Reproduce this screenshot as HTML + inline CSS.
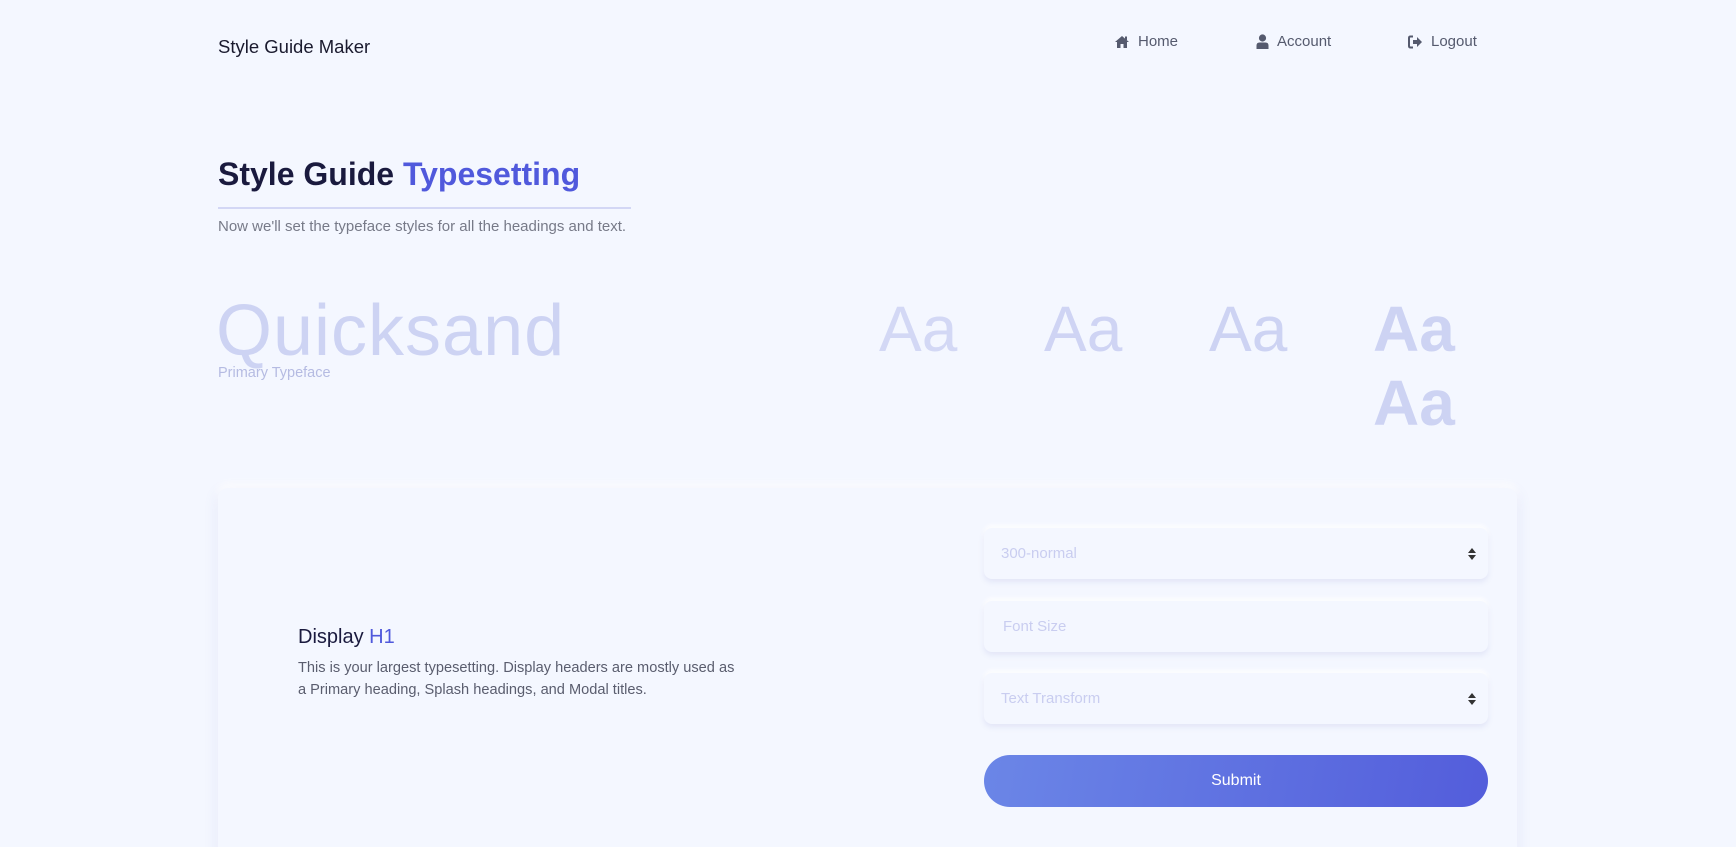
<!DOCTYPE html>
<html><head><meta charset="utf-8"><style>
*{margin:0;padding:0;box-sizing:border-box}
html,body{width:1736px;height:847px;overflow:hidden}
body{background:#f4f7ff;font-family:"Liberation Sans",sans-serif;position:relative}
.a{position:absolute;white-space:nowrap}
.nav{font-size:15px;color:#555a6e;display:flex;align-items:center;gap:8px}
.field{position:absolute;left:984px;width:504px;height:51px;background:#f4f7ff;border-radius:8px;box-shadow:0 3px 6px rgba(120,130,200,.14),0 -3px 5px rgba(255,255,255,.9);font-size:15px;color:#c9cdf0;padding-left:17px;line-height:51px}
.arr{position:absolute;right:12px;top:20px;width:8px;height:12px}
.aa{font-size:64px;color:#cdd3f3;top:292px}
</style></head><body>
<div class="a" style="left:218px;top:36px;font-size:18.5px;color:#1a1a2e">Style Guide Maker</div>
<div class="a nav" style="left:1114px;top:33px"><svg width="16" height="14" viewBox="0 0 16 14"><path d="M8 1 L1 7 L2.5 7 L3 7 L3 13 L6.5 13 L6.5 9 L9.5 9 L9.5 13 L13 13 L13 7 L15 7 Z" fill="#555a6e"/><rect x="11" y="1.5" width="2" height="3.5" fill="#555a6e"/></svg>Home</div>
<div class="a nav" style="left:1256px;top:33px"><svg width="13" height="15" viewBox="0 0 13 15"><circle cx="6.5" cy="4" r="3.6" fill="#555a6e"/><path d="M0.5 15 L0.5 11.5 Q0.5 8.5 3.5 8.5 L9.5 8.5 Q12.5 8.5 12.5 11.5 L12.5 15 Z" fill="#555a6e"/></svg>Account</div>
<div class="a nav" style="left:1408px;top:33px"><svg width="15" height="14" viewBox="0 0 15 14"><path d="M5 1.5 L2.5 1.5 Q1 1.5 1 3 L1 11 Q1 12.5 2.5 12.5 L5 12.5" stroke="#555a6e" stroke-width="2" fill="none"/><path d="M5 5 L9 5 L9 2 L14 7 L9 12 L9 9 L5 9 Z" fill="#555a6e"/></svg>Logout</div>

<div class="a" style="left:218px;top:156px;font-size:32px;font-weight:bold;color:#1a1a3e">Style Guide <span style="color:#5059dc">Typesetting</span></div>
<div class="a" style="left:218px;top:207px;width:413px;height:2px;background:#d3d7f5"></div>
<div class="a" style="left:218px;top:218px;font-size:15px;color:#777a88">Now we'll set the typeface styles for all the headings and text.</div>

<div class="a" style="left:216px;top:290px;font-size:72px;color:#cdd3f3;letter-spacing:1px">Quicksand</div>
<div class="a" style="left:218px;top:365px;font-size:14.5px;color:#b5bbe2">Primary Typeface</div>
<div class="a aa" style="left:879px;font-weight:300;color:#d3d8f5">Aa</div>
<div class="a aa" style="left:1044px;color:#cfd4f4">Aa</div>
<div class="a aa" style="left:1209px">Aa</div>
<div class="a aa" style="left:1373px;font-weight:bold">Aa</div>
<div class="a aa" style="left:1373px;top:366px;font-weight:bold">Aa</div>

<div class="a" style="left:218px;top:488px;width:1299px;height:372px;background:#f4f7ff;border-radius:10px;box-shadow:0 4px 14px rgba(120,130,210,.16),0 -5px 8px rgba(255,255,255,.9)"></div>
<div class="a" style="left:298px;top:626px;font-size:20px;color:#1a1a3e">Display <span style="color:#5059dc">H1</span></div>
<div class="a" style="left:298px;top:657px;font-size:14.6px;line-height:22px;color:#5a5d6e;white-space:normal;width:446px">This is your largest typesetting. Display headers are mostly used as a Primary heading, Splash headings, and Modal titles.</div>

<div class="field" style="top:528px">300-normal<svg class="arr" viewBox="0 0 8 12"><path d="M4 0 L8 5 L0 5 Z M0 7 L8 7 L4 12 Z" fill="#333"/></svg></div>
<div class="field" style="top:601px;padding-left:19px">Font Size</div>
<div class="field" style="top:673px">Text Transform<svg class="arr" viewBox="0 0 8 12"><path d="M4 0 L8 5 L0 5 Z M0 7 L8 7 L4 12 Z" fill="#333"/></svg></div>
<div class="a" style="left:984px;top:755px;width:504px;height:52px;border-radius:26px;background:linear-gradient(100deg,#6b86e7,#535ddb);color:#fff;font-size:16px;text-align:center;line-height:52px">Submit</div>
</body></html>
